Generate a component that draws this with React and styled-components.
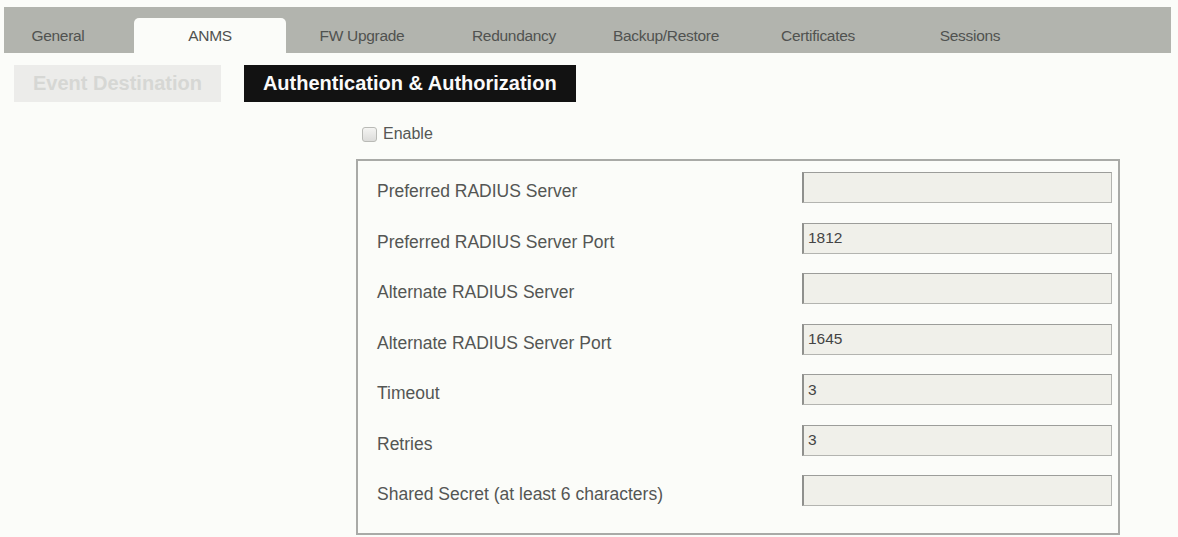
import React, { useState } from 'react';
import styled, { createGlobalStyle } from 'styled-components';

const GlobalStyle = createGlobalStyle`
  body {
    margin: 0;
    background: #fbfcf9;
    font-family: "Liberation Sans", Arial, sans-serif;
  }
`;

const tabs = ['General', 'ANMS', 'FW Upgrade', 'Redundancy', 'Backup/Restore', 'Certificates', 'Sessions'];

const fields = [
  { label: 'Preferred RADIUS Server', value: '' },
  { label: 'Preferred RADIUS Server Port', value: '1812' },
  { label: 'Alternate RADIUS Server', value: '' },
  { label: 'Alternate RADIUS Server Port', value: '1645' },
  { label: 'Timeout', value: '3' },
  { label: 'Retries', value: '3' },
  { label: 'Shared Secret (at least 6 characters)', value: '' },
];

function App() {
  const [activeTab, setActiveTab] = useState('ANMS');
  const [enabled, setEnabled] = useState(false);
  const [values, setValues] = useState(fields.map((f) => f.value));

  const handleChange = (index, value) => {
    const next = [...values];
    next[index] = value;
    setValues(next);
  };

  return (
    <Page>
      <GlobalStyle />
      <TabBar>
        <TabRow>
          {tabs.map((tab) => (
            <Tab key={tab} $active={tab === activeTab} onClick={() => setActiveTab(tab)}>
              {tab}
            </Tab>
          ))}
        </TabRow>
      </TabBar>

      <SubTabs>
        <SubTab>Event Destination</SubTab>
        <SubTab $active>Authentication &amp; Authorization</SubTab>
      </SubTabs>

      <Content>
        <EnableRow>
          <Check type="checkbox" checked={enabled} onChange={(e) => setEnabled(e.target.checked)} />
          <span>Enable</span>
        </EnableRow>

        <FormBox>
          {fields.map((field, index) => (
            <Row key={field.label}>
              <Label>{field.label}</Label>
              <Input value={values[index]} onChange={(e) => handleChange(index, e.target.value)} />
            </Row>
          ))}
        </FormBox>
      </Content>
    </Page>
  );
}

const Page = styled.div`
  padding: 7px 7px 0 4px;
`;

const TabBar = styled.div`
  height: 46px;
  width: 1167px;
  background: #b2b4ae;
  overflow: hidden;
  display: flex;
  align-items: flex-end;
`;

const TabRow = styled.div`
  display: flex;
  margin-left: -22px;
`;

const Tab = styled.div`
  width: 152px;
  height: 35px;
  display: flex;
  align-items: center;
  justify-content: center;
  font-size: 15.5px;
  color: #505250;
  letter-spacing: -0.3px;
  cursor: pointer;
  border-radius: 5px 5px 0 0;
  background: ${(p) => (p.$active ? '#fbfcf9' : 'transparent')};
`;

const SubTabs = styled.div`
  display: flex;
  gap: 23px;
  margin: 12px 0 0 10px;
`;

const SubTab = styled.div`
  height: 37px;
  padding: 0 19px;
  display: flex;
  align-items: center;
  font-size: 20px;
  font-weight: bold;
  background: ${(p) => (p.$active ? '#121212' : '#ececea')};
  color: ${(p) => (p.$active ? '#fafafa' : '#d6d7d4')};
`;

const Content = styled.div`
  margin-left: 352px;
  width: 764px;
`;

const EnableRow = styled.label`
  display: flex;
  align-items: center;
  gap: 6px;
  height: 16px;
  margin: 24px 0 17px 6px;
  font-size: 16px;
  color: #555755;
`;

const Check = styled.input`
  appearance: none;
  width: 15px;
  height: 15px;
  margin: 0;
  border: 1px solid #b9bab6;
  border-radius: 3px;
  background: linear-gradient(#f4f4f2, #dcdcda);
`;

const FormBox = styled.div`
  border: 2px solid #a9aaa7;
  padding: 11px 6px 27px 19px;
  display: grid;
  grid-auto-rows: 31px;
  row-gap: 19.5px;
`;

const Row = styled.div`
  display: flex;
  align-items: center;
  justify-content: space-between;
`;

const Label = styled.span`
  padding-top: 8px;
  font-size: 17.5px;
  color: #545654;
`;

const Input = styled.input`
  box-sizing: border-box;
  width: 310px;
  height: 31px;
  padding: 0 4px;
  font-family: "Liberation Sans", Arial, sans-serif;
  font-size: 15.5px;
  color: #444;
  background: #f0f0ea;
  border: 1px solid #b3b4b0;
  border-left: 2px solid #8f908d;
  border-top-color: #9c9d9a;
  outline: none;
`;

export default App;
